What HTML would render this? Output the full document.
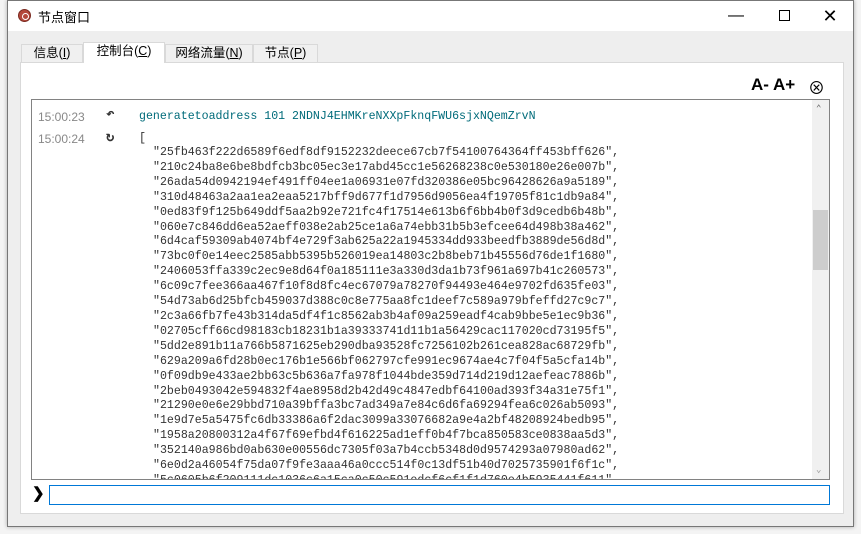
<!DOCTYPE html>
<html><head><meta charset="utf-8"><style>
*{margin:0;padding:0;box-sizing:border-box}
body{width:861px;height:534px;overflow:hidden;background:#f4f4f4;position:relative;font-family:"Liberation Sans","Noto Sans CJK SC",sans-serif}
.win{position:absolute;left:7px;top:0;width:847px;height:527px;background:#eeeeee;border:1px solid #777;box-shadow:0 0 4px rgba(0,0,0,.3)}
.title{position:absolute;left:0;top:0;width:100%;height:30px;background:#fff}
.title .t{position:absolute;left:30px;top:6px;font-size:13px;color:#000}
.icon{position:absolute;left:10px;top:8px;width:13px;height:13px;border-radius:50%;background:#b3473a;border:1px solid #7a2a20}
.icon:after{content:"";position:absolute;left:3px;top:3px;width:5px;height:5px;border-radius:50%;border:1px solid #fff}
.ctl{position:absolute;top:0;height:30px;width:46px;text-align:center;font-size:16px;line-height:30px}
.tab{position:absolute;top:43px;height:19px;border:1px solid #d9d9d9;border-bottom:none;background:#f0f0f0;font-size:12.5px;text-align:center;line-height:17px;color:#000}
.tab.a{top:41px;height:21px;background:#fff;z-index:2}
.panel{position:absolute;left:12px;top:61px;width:824px;height:452px;background:#fff;border:1px solid #d9d9d9}
.out{position:absolute;left:23px;top:98px;width:799px;height:381px;background:#fff;border:1px solid #828282;overflow:hidden;font-family:"Liberation Mono",monospace;font-size:11.6px;color:#333}
.l{position:absolute;white-space:pre}
.ts{color:#888;font-family:"Liberation Sans",sans-serif;font-size:12px}
.sb{position:absolute;right:0;top:0;width:17px;height:100%;background:#f0f0f0}
.th{position:absolute;right:1px;top:110px;width:15px;height:60px;background:#cdcdcd}
.inp{position:absolute;left:41px;top:484px;width:781px;height:20px;border:1px solid #0078d7;background:#fff}
</style></head><body>
<div class="win">
<div class="title"><div class="icon"></div><div class="t">节点窗口</div>
<div class="ctl" style="left:705px">&#8212;</div>
<div class="ctl" style="left:753px"><span style="display:inline-block;width:11px;height:11px;border:1.3px solid #000;vertical-align:middle"></span></div>
<div class="ctl" style="left:799px;font-size:18px">&#x2715;</div>
</div>
<div class="tab" style="left:13px;width:62px">信息(<u>I</u>)</div>
<div class="tab a" style="left:75px;width:82px">控制台(<u>C</u>)</div>
<div class="tab" style="left:157px;width:88px">网络流量(<u>N</u>)</div>
<div class="tab" style="left:245px;width:65px">节点(<u>P</u>)</div>
<div class="panel"></div>
<div style="position:absolute;left:743px;top:74px;font-size:17px;font-weight:bold">A- A+</div>
<div style="position:absolute;left:800px;top:73px;font-size:17px">&#x2297;</div>
<div class="out">
<div class="l ts" style="left:6px;top:10px">15:00:23</div>
<div class="l" style="left:74px;top:6px;font-size:14px;font-weight:bold">&#x21B6;</div>
<div class="l" style="left:107px;top:10px;color:#006b7a">generatetoaddress 101 2NDNJ4EHMKreNXXpFknqFWU6sjxNQemZrvN</div>
<div class="l ts" style="left:6px;top:32px">15:00:24</div>
<div class="l" style="left:74px;top:29px;font-size:14px;font-weight:bold">&#x21BB;</div>
<div class="l" style="left:107px;top:32px">[</div>
<div class="l" style="left:121px;top:46px;line-height:14.9px">"25fb463f222d6589f6edf8df9152232deece67cb7f54100764364ff453bff626",
"210c24ba8e6be8bdfcb3bc05ec3e17abd45cc1e56268238c0e530180e26e007b",
"26ada54d0942194ef491ff04ee1a06931e07fd320386e05bc96428626a9a5189",
"310d48463a2aa1ea2eaa5217bff9d677f1d7956d9056ea4f19705f81c1db9a84",
"0ed83f9f125b649ddf5aa2b92e721fc4f17514e613b6f6bb4b0f3d9cedb6b48b",
"060e7c846dd6ea52aeff038e2ab25ce1a6a74ebb31b5b3efcee64d498b38a462",
"6d4caf59309ab4074bf4e729f3ab625a22a1945334dd933beedfb3889de56d8d",
"73bc0f0e14eec2585abb5395b526019ea14803c2b8beb71b45556d76de1f1680",
"2406053ffa339c2ec9e8d64f0a185111e3a330d3da1b73f961a697b41c260573",
"6c09c7fee366aa467f10f8d8fc4ec67079a78270f94493e464e9702fd635fe03",
"54d73ab6d25bfcb459037d388c0c8e775aa8fc1deef7c589a979bfeffd27c9c7",
"2c3a66fb7fe43b314da5df4f1c8562ab3b4af09a259eadf4cab9bbe5e1ec9b36",
"02705cff66cd98183cb18231b1a39333741d11b1a56429cac117020cd73195f5",
"5dd2e891b11a766b5871625eb290dba93528fc7256102b261cea828ac68729fb",
"629a209a6fd28b0ec176b1e566bf062797cfe991ec9674ae4c7f04f5a5cfa14b",
"0f09db9e433ae2bb63c5b636a7fa978f1044bde359d714d219d12aefeac7886b",
"2beb0493042e594832f4ae8958d2b42d49c4847edbf64100ad393f34a31e75f1",
"21290e0e6e29bbd710a39bffa3bc7ad349a7e84c6d6fa69294fea6c026ab5093",
"1e9d7e5a5475fc6db33386a6f2dac3099a33076682a9e4a2bf48208924bedb95",
"1958a20800312a4f67f69efbd4f616225ad1eff0b4f7bca850583ce0838aa5d3",
"352140a986bd0ab630e00556dc7305f03a7b4ccb5348d0d9574293a07980ad62",
"6e0d2a46054f75da07f9fe3aaa46a0ccc514f0c13df51b40d7025735901f6f1c",
"5c0605b6f209111dc1036c6a15ca0c50c591edcf6cf1f1d760e4b5935441f611",</div>
<div class="sb"><div style="position:absolute;left:4px;top:4px;font-size:9px;color:#606060">&#x2303;</div><div class="th"></div><div style="position:absolute;left:4px;bottom:4px;font-size:9px;color:#999">&#x2304;</div></div>
</div>
<div style="position:absolute;left:24px;top:483px;font-size:15px;font-weight:bold">&#x276F;</div>
<div class="inp"></div>
</div>
</body></html>
